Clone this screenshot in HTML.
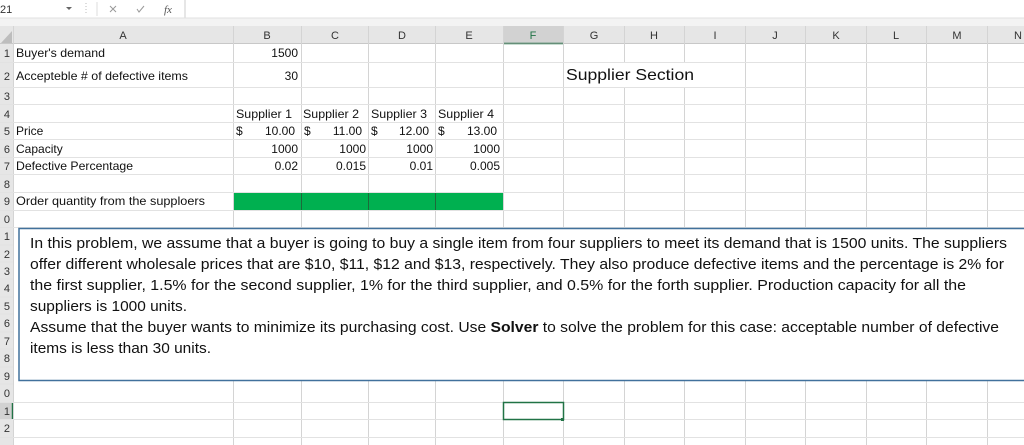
<!DOCTYPE html>
<html><head><meta charset="utf-8"><style>
body{margin:0;width:1024px;height:445px;overflow:hidden;background:#fff;font-family:"Liberation Sans",sans-serif}
svg{position:absolute;left:0;top:0}
</style></head><body>
<svg width="1024" height="445" viewBox="0 0 1024 445" font-family="Liberation Sans, sans-serif">
<rect x="0" y="0" width="1024" height="26" fill="#fff"/>
<rect x="0" y="18" width="1024" height="8" fill="#f3f3f3"/>
<text x="0" y="13" font-size="11" fill="#333">21</text>
<path d="M66 7l3 3 3-3z" fill="#666"/>
<line x1="86" y1="3" x2="86" y2="15" stroke="#bbb" stroke-dasharray="1,2"/>
<line x1="97" y1="2" x2="97" y2="16" stroke="#ddd"/>
<path d="M110 6l6 6M116 6l-6 6" stroke="#999" stroke-width="1"/>
<path d="M137 9l2 3 5-6" stroke="#999" fill="none"/>
<text x="164" y="13" font-size="11" font-style="italic" font-family="Liberation Serif" fill="#555">fx</text>
<line x1="185" y1="0" x2="185" y2="18" stroke="#ccc"/>
<line x1="0" y1="18" x2="1024" y2="18" stroke="#e0e0e0"/>
<rect x="0" y="26" width="1024" height="18" fill="#e6e6e6"/>
<rect x="503" y="26" width="60" height="18" fill="#d2d2d2"/>
<line x1="503" y1="43.5" x2="563" y2="43.5" stroke="#217346" stroke-width="1.5"/>
<path d="M1 43L12 43 12 31z" fill="#bdbdbd"/>
<line x1="0" y1="43.5" x2="1024" y2="43.5" stroke="#aaa" stroke-width="0.6"/>
<rect x="0" y="44" width="13" height="401" fill="#e6e6e6"/>
<rect x="0" y="402" width="13" height="18" fill="#d2d2d2"/>
<line x1="12.5" y1="402" x2="12.5" y2="420" stroke="#217346" stroke-width="1.5"/>
<g stroke="#d4d4d4" stroke-width="1">
<line x1="233.5" y1="26" x2="233.5" y2="445"/><line x1="301.5" y1="26" x2="301.5" y2="445"/>
<line x1="368.5" y1="26" x2="368.5" y2="445"/><line x1="435.5" y1="26" x2="435.5" y2="445"/>
<line x1="503.5" y1="26" x2="503.5" y2="445"/><line x1="563.5" y1="26" x2="563.5" y2="445"/>
<line x1="624.5" y1="26" x2="624.5" y2="445"/><line x1="684.5" y1="26" x2="684.5" y2="445"/>
<line x1="745.5" y1="26" x2="745.5" y2="445"/><line x1="805.5" y1="26" x2="805.5" y2="445"/>
<line x1="866.5" y1="26" x2="866.5" y2="445"/><line x1="926.5" y1="26" x2="926.5" y2="445"/>
<line x1="987.5" y1="26" x2="987.5" y2="445"/><line x1="13.5" y1="26" x2="13.5" y2="445"/>
</g>
<g stroke="#e2e2e2" stroke-width="1">
<line x1="0" y1="62.5" x2="1024" y2="62.5"/><line x1="0" y1="87.5" x2="1024" y2="87.5"/>
<line x1="0" y1="104.5" x2="1024" y2="104.5"/><line x1="0" y1="122.5" x2="1024" y2="122.5"/>
<line x1="0" y1="139.5" x2="1024" y2="139.5"/><line x1="0" y1="157.5" x2="1024" y2="157.5"/>
<line x1="0" y1="174.5" x2="1024" y2="174.5"/><line x1="0" y1="192.5" x2="1024" y2="192.5"/>
<line x1="0" y1="210.5" x2="1024" y2="210.5"/><line x1="0" y1="227.5" x2="1024" y2="227.5"/>
<line x1="0" y1="402.5" x2="1024" y2="402.5"/><line x1="0" y1="419.5" x2="1024" y2="419.5"/>
<line x1="0" y1="437.5" x2="1024" y2="437.5"/>
<line x1="0" y1="245" x2="13" y2="245"/><line x1="0" y1="262" x2="13" y2="262"/>
<line x1="0" y1="279" x2="13" y2="279"/><line x1="0" y1="297" x2="13" y2="297"/>
<line x1="0" y1="314" x2="13" y2="314"/><line x1="0" y1="332" x2="13" y2="332"/>
<line x1="0" y1="349" x2="13" y2="349"/><line x1="0" y1="367" x2="13" y2="367"/>
<line x1="0" y1="384" x2="13" y2="384"/>
</g>
<rect x="564" y="63" width="180" height="24" fill="#fff"/>
<g font-size="11" fill="#333" text-anchor="middle">
<text x="123" y="39">A</text><text x="267" y="39">B</text><text x="335" y="39">C</text>
<text x="402" y="39">D</text><text x="469" y="39">E</text><text x="533" y="39" fill="#217346">F</text>
<text x="594" y="39">G</text><text x="654" y="39">H</text><text x="715" y="39">I</text>
<text x="775" y="39">J</text><text x="836" y="39">K</text><text x="896" y="39">L</text>
<text x="957" y="39">M</text><text x="1018" y="39">N</text>
</g>
<g font-size="11" fill="#333" text-anchor="end">
<text x="10" y="57">1</text><text x="10" y="80">2</text><text x="10" y="100">3</text>
<text x="10" y="118">4</text><text x="10" y="135">5</text><text x="10" y="153">6</text>
<text x="10" y="170">7</text><text x="10" y="188">8</text><text x="10" y="205">9</text>
<text x="10" y="223">0</text><text x="10" y="240">1</text><text x="10" y="258">2</text>
<text x="10" y="275">3</text><text x="10" y="292">4</text><text x="10" y="310">5</text>
<text x="10" y="327">6</text><text x="10" y="345">7</text><text x="10" y="362">8</text>
<text x="10" y="380">9</text><text x="10" y="397">0</text><text x="10" y="415">1</text>
<text x="10" y="432">2</text>
</g>
<rect x="234" y="193" width="269" height="17" fill="#00b050"/>
<g stroke="#1d6a3a"><line x1="301.5" y1="193" x2="301.5" y2="210"/><line x1="368.5" y1="193" x2="368.5" y2="210"/><line x1="435.5" y1="193" x2="435.5" y2="210"/></g>
<g font-size="12" fill="#111">
<text x="16" y="57" textLength="89" lengthAdjust="spacingAndGlyphs">Buyer's demand</text>
<text x="16" y="80" textLength="172" lengthAdjust="spacingAndGlyphs">Accepteble # of defective items</text>
<text x="16" y="135">Price</text>
<text x="16" y="153">Capacity</text>
<text x="16" y="170" textLength="117" lengthAdjust="spacingAndGlyphs">Defective Percentage</text>
<text x="16" y="205" textLength="189" lengthAdjust="spacingAndGlyphs">Order quantity from the supploers</text>
<g text-anchor="end">
<text x="298" y="57">1500</text><text x="298" y="80">30</text>
<text x="298" y="153">1000</text><text x="366" y="153">1000</text><text x="433" y="153">1000</text><text x="500" y="153">1000</text>
<text x="298" y="170">0.02</text><text x="366" y="170">0.015</text><text x="433" y="170">0.01</text><text x="500" y="170">0.005</text>
<text x="295" y="135">10.00</text><text x="362" y="135">11.00</text><text x="429" y="135">12.00</text><text x="497" y="135">13.00</text>
</g>
<text x="236" y="135">$</text><text x="304" y="135">$</text><text x="371" y="135">$</text><text x="438" y="135">$</text>
<text x="236" y="118" textLength="56" lengthAdjust="spacingAndGlyphs">Supplier 1</text><text x="303" y="118" textLength="56" lengthAdjust="spacingAndGlyphs">Supplier 2</text><text x="371" y="118" textLength="56" lengthAdjust="spacingAndGlyphs">Supplier 3</text><text x="438" y="118" textLength="56" lengthAdjust="spacingAndGlyphs">Supplier 4</text>
</g>
<text x="566" y="80" font-size="16" fill="#111" textLength="128" lengthAdjust="spacingAndGlyphs">Supplier Section</text>
<rect x="19" y="228.5" width="1010" height="152" fill="#fff" stroke="#41719c" stroke-width="1.5"/>
<g font-size="15" fill="#111">
<text x="30" y="248" textLength="977" lengthAdjust="spacingAndGlyphs">In this problem, we assume that a buyer is going to buy a single item from four suppliers to meet its demand that is 1500 units. The suppliers</text>
<text x="30" y="269" textLength="974" lengthAdjust="spacingAndGlyphs">offer different wholesale prices that are $10, $11, $12 and $13, respectively. They also produce defective items and the percentage is 2% for</text>
<text x="30" y="290" textLength="936" lengthAdjust="spacingAndGlyphs">the first supplier, 1.5% for the second supplier, 1% for the third supplier, and 0.5% for the forth supplier. Production capacity for all the</text>
<text x="30" y="311" textLength="157" lengthAdjust="spacingAndGlyphs">suppliers is 1000 units.</text>
<text x="30" y="332" textLength="969" lengthAdjust="spacingAndGlyphs">Assume that the buyer wants to minimize its purchasing cost. Use <tspan font-weight="bold">Solver</tspan> to solve the problem for this case: acceptable number of defective</text>
<text x="30" y="353" textLength="181" lengthAdjust="spacingAndGlyphs">items is less than 30 units.</text>
</g>
<rect x="503.5" y="402.5" width="60" height="17" fill="none" stroke="#217346" stroke-width="1.5"/>
<rect x="561" y="418" width="3" height="3" fill="#217346"/>
</svg>
</body></html>
